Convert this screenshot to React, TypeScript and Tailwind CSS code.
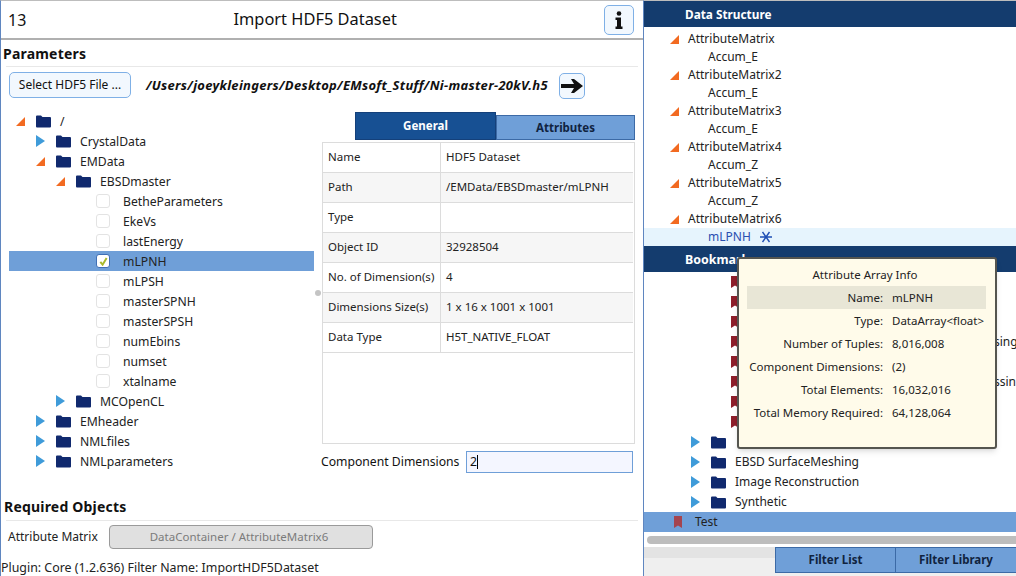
import React from "react";

const font = "font-['Noto_Sans',sans-serif]";

function Open() {
  return (
    <svg width="9" height="9" viewBox="0 0 9 9" className="shrink-0">
      <path d="M9 0V9H0Z" fill="#f26a21" />
    </svg>
  );
}

function Closed() {
  return (
    <svg width="9" height="12" viewBox="0 0 9 12" className="shrink-0">
      <path d="M0 0L9 6L0 12Z" fill="#3f9bd9" />
    </svg>
  );
}

function Folder() {
  return (
    <svg width="15" height="13" viewBox="0 0 15 13" className="shrink-0">
      <path
        d="M0 1.5Q0 .5 1 .5H5L6.5 2H14Q15 2 15 3V11.5Q15 12.5 14 12.5H1Q0 12.5 0 11.5Z"
        fill="#10296e"
      />
    </svg>
  );
}

function Bookmark({ color = "#a5444f" }: { color?: string }) {
  return (
    <svg width="8" height="12" viewBox="0 0 8 12" className="shrink-0">
      <path d="M0 0H8V12L4 9.5L0 12Z" fill={color} />
    </svg>
  );
}

function Check({ on }: { on?: boolean }) {
  return (
    <span className={`w-[14px] h-[14px] shrink-0 rounded-[3px] bg-white border flex items-center justify-center ${on ? "border-[#3f6fb5]" : "border-[#e3e3e3]"}`}>
      {on && (
        <svg width="9" height="9" viewBox="0 0 10 10">
          <path d="M1.5 5.5L4 8.5L8.5 1" fill="none" stroke="#a9b92e" strokeWidth="2.2" />
        </svg>
      )}
    </span>
  );
}

function FolderRow({ indent, open, label }: { indent: string; open?: boolean; label: string }) {
  return (
    <div className={`h-5 flex items-center ${indent}`}>
      <span className="w-[9px] flex justify-center">{open ? <Open /> : <Closed />}</span>
      <span className="ml-[11px]">
        <Folder />
      </span>
      <span className="ml-[9px] mt-[2px]">{label}</span>
    </div>
  );
}

function LeafRow({ label, on }: { label: string; on?: boolean }) {
  return (
    <div className={`h-5 flex items-center pl-[87px] ${on ? "bg-[#6f9fd8]" : ""}`}>
      <Check on={on} />
      <span className="ml-[13px] mt-[2px]">{label}</span>
    </div>
  );
}

const specs = [
  ["Name", "HDF5 Dataset"],
  ["Path", "/EMData/EBSDmaster/mLPNH"],
  ["Type", ""],
  ["Object ID", "32928504"],
  ["No. of Dimension(s)", "4"],
  ["Dimensions Size(s)", "1 x 16 x 1001 x 1001"],
  ["Data Type", "H5T_NATIVE_FLOAT"],
];

const matrices = [
  ["AttributeMatrix", "Accum_E"],
  ["AttributeMatrix2", "Accum_E"],
  ["AttributeMatrix3", "Accum_E"],
  ["AttributeMatrix4", "Accum_Z"],
  ["AttributeMatrix5", "Accum_Z"],
];

const info = [
  ["Type:", "DataArray<float>"],
  ["Number of Tuples:", "8,016,008"],
  ["Component Dimensions:", "(2)"],
  ["Total Elements:", "16,032,016"],
  ["Total Memory Required:", "64,128,064"],
];

function LeftPanel() {
  return (
    <div className="w-[643px] h-full shrink-0 flex flex-col border-l border-l-[#5f86c0] border-t border-t-[#bdbdbd]">
      <header className="h-[39px] shrink-0 flex items-center border-b-2 border-[#b0b0b0] pl-[7px] pr-[9px]">
        <span className="text-[16px]">13</span>
        <h1 className="flex-1 text-center text-[16.4px]">Import HDF5 Dataset</h1>
        <button className="w-[30px] h-[30px] rounded-[5px] border border-[#7fb0e6] bg-[#f2f8fe] flex items-center justify-center">
          <svg width="8" height="18" viewBox="0 0 8 18">
            <circle cx="4" cy="2.5" r="2.3" fill="#111" />
            <path d="M.5 6.5H6V15.5H7.5V18H.5V15.5H2V9H.5Z" fill="#111" />
          </svg>
        </button>
      </header>

      <h2 className="mt-[3px] ml-[2px] h-[20px] flex items-center font-bold text-[14px] tracking-[0.2px]">Parameters</h2>
      <div className="mt-[3px] ml-[5px] mr-[5px] border-t border-[#e8e8e8]" />

      <div className="mt-[5px] ml-[8px] flex items-start">
        <button className="w-[122px] h-[26px] rounded-[5px] border border-[#7fb0e6] bg-[#f2f8fe] text-[12px]">
          Select HDF5 File ...
        </button>
        <span className="ml-[15px] w-[413px] self-center font-bold italic text-[13px] tracking-[0.29px] whitespace-nowrap">
          /Users/joeykleingers/Desktop/EMsoft_Stuff/Ni-master-20kV.h5
        </span>
        <button className="w-[26px] h-[26px] mt-[1px] rounded-[5px] border border-[#7fb0e6] bg-[#f2f8fe] flex items-center justify-center">
          <svg width="22" height="14" viewBox="0 0 22 14">
            <path d="M0 5H13L10 0H13L22 7L13 14H10L13 9H0Z" fill="#111" />
          </svg>
        </button>
      </div>

      <div className="mt-[12px] flex">
        <div className="w-[305px] ml-[8px] shrink-0 text-[12.2px] text-[#222]">
          <FolderRow indent="pl-[7px]" open label="/" />
          <FolderRow indent="pl-[27px]" label="CrystalData" />
          <FolderRow indent="pl-[27px]" open label="EMData" />
          <FolderRow indent="pl-[47px]" open label="EBSDmaster" />
          <LeafRow label="BetheParameters" />
          <LeafRow label="EkeVs" />
          <LeafRow label="lastEnergy" />
          <LeafRow label="mLPNH" on />
          <LeafRow label="mLPSH" />
          <LeafRow label="masterSPNH" />
          <LeafRow label="masterSPSH" />
          <LeafRow label="numEbins" />
          <LeafRow label="numset" />
          <LeafRow label="xtalname" />
          <FolderRow indent="pl-[47px]" label="MCOpenCL" />
          <FolderRow indent="pl-[27px]" label="EMheader" />
          <FolderRow indent="pl-[27px]" label="NMLfiles" />
          <FolderRow indent="pl-[27px]" label="NMLparameters" />
        </div>

        <div className="w-[8px] shrink-0 flex items-start justify-center pt-[179px]">
          <span className="w-[6px] h-[6px] rounded-full bg-[#c4c4c4]" />
        </div>

        <div className="w-[313px] shrink-0 mt-[1px]">
          <div className="flex items-end pl-[33px] text-[11.5px] font-bold">
            <div className="w-[141px] h-[28px] bg-[#175093] border border-[#14407a] text-white flex items-center justify-center">
              General
            </div>
            <div className="w-[139px] h-[25px] bg-[#6f9fd8] border border-[#3c6aa6] text-[#10233f] flex items-center justify-center">
              Attributes
            </div>
          </div>
          <div className="mt-[2px] h-[302px] border border-[#dcdcdc] text-[11.5px] text-[#222]">
            {specs.map(([name, value], i) => (
              <div
                key={name}
                className={`h-[30px] flex items-center border-b border-[#dcdcdc] mr-[1px] ${i % 2 ? "bg-[#f6f6f6]" : "bg-white"}`}
              >
                <span className="w-[118px] h-full flex items-center pl-[5px] pb-[2px] border-r border-[#dcdcdc] whitespace-nowrap">{name}</span>
                <span className="pl-[5px] mb-[2px]">{value}</span>
              </div>
            ))}
          </div>
          <div className="mt-[7px] -ml-[1px] flex items-center text-[12.2px]">
            <span className="w-[145px] whitespace-nowrap">Component Dimensions</span>
            <span className="w-[167px] h-[22px] border border-[#6f9fd8] bg-[#f4f6ff] pl-[3px] flex items-center">
              2<span className="w-px h-[14px] bg-black" />
            </span>
          </div>
        </div>
      </div>

      <h2 className="mt-[23px] ml-[3px] h-[20px] flex items-center font-bold text-[14px] tracking-[0.2px]">Required Objects</h2>
      <div className="mt-[4px] ml-[5px] mr-[5px] border-t border-[#e8e8e8]" />
      <div className="mt-[4px] ml-[7px] flex items-center text-[12px] text-[#222]">
        <span className="w-[101px]">Attribute Matrix</span>
        <div className="w-[264px] h-[24px] rounded-[4px] border border-[#9a9a9a] bg-[#e0e0e0] text-[#7b7b7b] text-[11.5px] pr-[4px] flex items-center justify-center">
          DataContainer / AttributeMatrix6
        </div>
      </div>
      <div className="mt-[11px] h-[16px] leading-[16px] text-[12.4px] text-[#222] whitespace-nowrap">
        Plugin: Core (1.2.636) Filter Name: ImportHDF5Dataset
      </div>
    </div>
  );
}

function Tooltip() {
  return (
    <div className="absolute left-[93px] top-[256px] w-[260px] h-[192px] rounded-[3px] border-2 border-[#55554f] bg-[#fffbea] shadow-md text-[11.5px] text-[#222] pt-[7px] pl-[8px] pr-[9px]">
      <div className="h-[17px] flex items-center justify-center pr-[3px]">Attribute Array Info</div>
      <div className="mt-[3px] h-[23px] flex items-center bg-[#e8e6d6]">
        <span className="w-[136px] text-right">Name:</span>
        <span className="ml-[9px]">mLPNH</span>
      </div>
      {info.map(([label, value]) => (
        <div key={label} className="h-[23px] flex items-center whitespace-nowrap">
          <span className="w-[136px] text-right">{label}</span>
          <span className="ml-[9px]">{value}</span>
        </div>
      ))}
    </div>
  );
}

function RightPanel() {
  return (
    <div className="relative flex-1 h-full flex flex-col border-l border-[#5f86c0] overflow-hidden border-t border-t-[#bdbdbd] text-[12px] text-[#222]">
      <div className="h-[26px] shrink-0 bg-[#143c6e] text-white font-bold text-[11.8px] pl-[41px] pt-[1px] flex items-center">Data Structure</div>
      <div className="pt-[3px]">
        {matrices.map(([m, a]) => (
          <div key={m}>
            <div className="h-[18px] flex items-center pl-[26px]">
              <Open />
              <span className="ml-[9px]">{m}</span>
            </div>
            <div className="h-[18px] flex items-center pl-[64px]">{a}</div>
          </div>
        ))}
        <div className="h-[18px] flex items-center pl-[26px]">
          <Open />
          <span className="ml-[9px]">AttributeMatrix6</span>
        </div>
        <div className="h-[18px] flex items-center pl-[64px] bg-[#e6f4fd] text-[#2a4fb0]">
          mLPNH
          <svg width="12" height="12" viewBox="0 0 12 12" className="ml-[9px]">
            <path d="M0 6H12M2.5 1L9.5 11M9.5 1L2.5 11" stroke="#1f4fb5" strokeWidth="1.4" fill="none" />
          </svg>
        </div>
      </div>
      <div className="h-[26px] shrink-0 bg-[#143c6e] text-white font-bold text-[12.4px] pl-[41px] pt-[2px] flex items-center">Bookmarks</div>
      <div className="flex-1 overflow-hidden whitespace-nowrap">
        {["", "", "", "sing", "", "ssin", "", ""].map((t, i) => (
          <div key={i} className="h-5 flex items-center pl-[87px]">
            <Bookmark color="#8e1f2b" />
            <span className="ml-[12px] pl-[243px]">{t}</span>
          </div>
        ))}
        {["", "EBSD SurfaceMeshing", "Image Reconstruction", "Synthetic"].map((t) => (
          <div key={t} className="h-5 flex items-center pl-[47px]">
            <Closed />
            <span className="ml-[11px]">
              <Folder />
            </span>
            <span className="ml-[9px]">{t}</span>
          </div>
        ))}
      </div>
      <div className="h-5 shrink-0 bg-[#6f9fd8] flex items-center pl-[30px]">
        <Bookmark />
        <span className="ml-[13px]">Test</span>
      </div>
      <div className="h-[15px] shrink-0 bg-white flex items-start pt-[4px] pl-[3px]">
        <div className="w-full h-[8px] rounded-l-full bg-[#bdbdbd]" />
      </div>
      <div className="h-[29px] shrink-0 bg-[#efefef] flex items-start font-bold text-[11.5px]">
        <div className="flex-1 h-[11px] bg-[#e3e3e3]" />
        <div className="w-[121px] h-[26px] bg-[#6f9fd8] border border-[#3c6aa6] flex items-center justify-center text-[#10233f]">Filter List</div>
        <div className="w-[120px] h-[26px] bg-[#6f9fd8] border-y border-[#3c6aa6] flex items-center justify-center text-[#10233f]">Filter Library</div>
      </div>
      <Tooltip />
    </div>
  );
}

export default function App() {
  return (
    <div className={`w-[1016px] h-[576px] flex overflow-hidden bg-white text-[#111] ${font}`}>
      <LeftPanel />
      <RightPanel />
    </div>
  );
}
